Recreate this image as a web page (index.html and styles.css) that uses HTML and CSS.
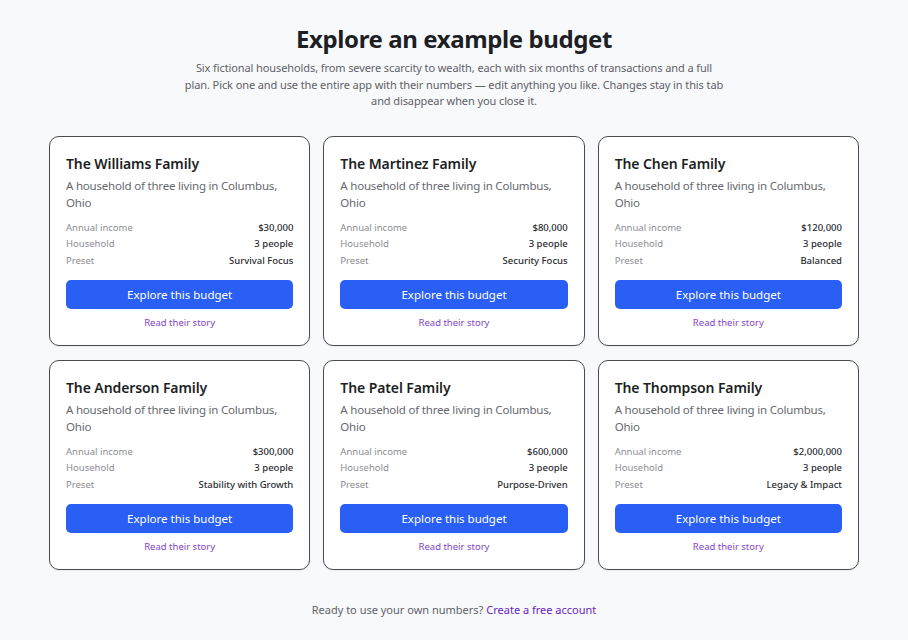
FILE: index.html
```html
<!DOCTYPE html>
<html lang="en">

<head>
    <meta charset="UTF-8">
    <meta name="viewport" content="width=device-width, initial-scale=1.0">
    <title>Explore an example budget</title>
    <link rel="stylesheet" href="styles.css">
</head>

<body>
    <main class="pagina">
        <header class="cabecalho">
            <h1>Explore an example budget</h1>
            <p>Six fictional households, from severe scarcity to wealth, each with six months of transactions and a full plan. Pick one and use the entire app with their numbers — edit anything you like. Changes stay in this tab and disappear when you close it.</p>
        </header>
        <section class="grade">
            <div class="cartao">
                <h2>The Williams Family</h2>
                <p class="descricao">A household of three living in Columbus, Ohio</p>
                <dl class="dados">
                    <dt>Annual income</dt><dd>$30,000</dd>
                    <dt>Household</dt><dd>3 people</dd>
                    <dt>Preset</dt><dd>Survival Focus</dd>
                </dl>
                <button class="botao-explorar">Explore this budget</button>
                <a class="link-historia" href="#">Read their story</a>
            </div>
            <div class="cartao">
                <h2>The Martinez Family</h2>
                <p class="descricao">A household of three living in Columbus, Ohio</p>
                <dl class="dados">
                    <dt>Annual income</dt><dd>$80,000</dd>
                    <dt>Household</dt><dd>3 people</dd>
                    <dt>Preset</dt><dd>Security Focus</dd>
                </dl>
                <button class="botao-explorar">Explore this budget</button>
                <a class="link-historia" href="#">Read their story</a>
            </div>
            <div class="cartao">
                <h2>The Chen Family</h2>
                <p class="descricao">A household of three living in Columbus, Ohio</p>
                <dl class="dados">
                    <dt>Annual income</dt><dd>$120,000</dd>
                    <dt>Household</dt><dd>3 people</dd>
                    <dt>Preset</dt><dd>Balanced</dd>
                </dl>
                <button class="botao-explorar">Explore this budget</button>
                <a class="link-historia" href="#">Read their story</a>
            </div>
            <div class="cartao">
                <h2>The Anderson Family</h2>
                <p class="descricao">A household of three living in Columbus, Ohio</p>
                <dl class="dados">
                    <dt>Annual income</dt><dd>$300,000</dd>
                    <dt>Household</dt><dd>3 people</dd>
                    <dt>Preset</dt><dd>Stability with Growth</dd>
                </dl>
                <button class="botao-explorar">Explore this budget</button>
                <a class="link-historia" href="#">Read their story</a>
            </div>
            <div class="cartao">
                <h2>The Patel Family</h2>
                <p class="descricao">A household of three living in Columbus, Ohio</p>
                <dl class="dados">
                    <dt>Annual income</dt><dd>$600,000</dd>
                    <dt>Household</dt><dd>3 people</dd>
                    <dt>Preset</dt><dd>Purpose-Driven</dd>
                </dl>
                <button class="botao-explorar">Explore this budget</button>
                <a class="link-historia" href="#">Read their story</a>
            </div>
            <div class="cartao">
                <h2>The Thompson Family</h2>
                <p class="descricao">A household of three living in Columbus, Ohio</p>
                <dl class="dados">
                    <dt>Annual income</dt><dd>$2,000,000</dd>
                    <dt>Household</dt><dd>3 people</dd>
                    <dt>Preset</dt><dd>Legacy &amp; Impact</dd>
                </dl>
                <button class="botao-explorar">Explore this budget</button>
                <a class="link-historia" href="#">Read their story</a>
            </div>
        </section>
        <p class="rodape">Ready to use your own numbers? <a href="#">Create a free account</a></p>
    </main>
</body>

</html>
```

FILE: styles.css
```css
body {
    margin: 0;
    background-color: #f8f9fb;
    font-family: "Noto Sans", "Open Sans", sans-serif;
    color: #1d1f24;
}

.pagina {
    width: 810px;
    margin: 0 auto;
    padding-top: 23px;
}

.cabecalho {
    text-align: center;
}

.cabecalho h1 {
    margin: 0;
    font-size: 24px;
    font-weight: 700;
    line-height: 32px;
    letter-spacing: -0.4px;
}

.cabecalho p {
    width: 542px;
    margin: 5px auto 0;
    font-size: 11px;
    line-height: 16.5px;
    letter-spacing: -0.1px;
    color: #5f6168;
}

.grade {
    display: grid;
    grid-template-columns: repeat(3, 1fr);
    gap: 14px 13px;
    margin-top: 26px;
}

.cartao {
    display: flex;
    flex-direction: column;
    height: 210px;
    padding: 17px 16px 0 16px;
    box-sizing: border-box;
    background-color: #fff;
    border: 1px solid #4a4c52;
    border-radius: 10px;
    box-shadow: 0 1px 2px rgba(0, 0, 0, 0.06);
}

.cartao h2 {
    margin: 0;
    font-size: 14px;
    font-weight: 600;
    line-height: 20px;
    letter-spacing: -0.1px;
}

.descricao {
    margin: 3px 0 0;
    font-size: 11.5px;
    line-height: 17px;
    letter-spacing: -0.2px;
    color: #66686e;
}

.dados {
    display: grid;
    grid-template-columns: 1fr auto;
    margin: 9px 0 0;
    font-size: 9.5px;
    line-height: 16.5px;
}

.dados dt {
    color: #8b8d93;
}

.dados dd {
    margin: 0;
    text-align: right;
    font-weight: 500;
    color: #2a2c31;
}

.botao-explorar {
    margin-top: 11px;
    height: 29px;
    border: none;
    border-radius: 5px;
    background-color: #2a5ff5;
    color: #fff;
    font-family: inherit;
    font-size: 11.5px;
}

.link-historia {
    margin-top: 7px;
    text-align: center;
    font-size: 9.5px;
    color: #8545c4;
    text-decoration: none;
}

.rodape {
    margin: 32px 0 0;
    text-align: center;
    font-size: 11px;
    color: #5f6168;
}

.rodape a {
    color: #6a1fc2;
    text-decoration: none;
}
```
